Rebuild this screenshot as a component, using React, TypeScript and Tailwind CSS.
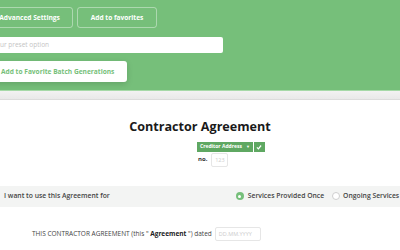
export default function App() {
  return (
    <div
      className="h-[250px] w-[400px] overflow-hidden bg-white"
      style={{ fontFamily: "'Open Sans', 'Noto Sans', sans-serif" }}
    >
      <div className="h-[90px] bg-[#76bf7a] pt-[7px]">
        <div className="-ml-[14px] flex gap-[4px]">
          <button className="flex h-[21px] w-[87px] items-center justify-center rounded-[3px] border border-white/40 text-[6.6px] font-bold text-white">
            Advanced Settings
          </button>
          <button className="flex h-[21px] w-[80px] items-center justify-center rounded-[3px] border border-white/40 text-[6.6px] font-bold text-white">
            Add to favorites
          </button>
        </div>
        <div className="-ml-[12px] mt-[9px] flex h-[16px] w-[235px] items-center rounded-[2px] bg-white px-[12px] text-[6.5px] text-[#c4c4c4]">
          ur preset option
        </div>
        <button className="-ml-[10px] mt-[8px] flex h-[21px] w-[137px] items-center rounded-[3px] bg-white pl-[11px] text-[6.6px] font-bold text-[#76bf7a] shadow-[0_2px_6px_rgba(0,0,0,0.15)]">
          Add to Favorite Batch Generations
        </button>
      </div>
      <div className="h-[10px] border-t border-[#a6d9a8] border-b border-b-[#dcdcdc] bg-gradient-to-b from-[#f2f2f2] to-[#e9e9e9]" />

      <div className="mt-[18px] text-center text-[12.6px] font-bold text-[#1a1a1a]">
        Contractor Agreement
      </div>
      <div className="ml-[197px] mt-[5px] flex h-[10px] gap-px">
        <div className="flex items-center gap-[4px] bg-[#5fa862] px-[3px] text-[5px] font-bold text-white">
          Creditor Address <span className="text-[4px]">▼</span>
        </div>
        <div className="flex w-[11px] items-center justify-center bg-[#5fa862]">
          <svg viewBox="0 0 10 10" className="h-[6px] w-[6px]" fill="none" stroke="white" strokeWidth="2">
            <path d="M1.5 5.5 L4 8 L8.5 2.5" />
          </svg>
        </div>
      </div>
      <div className="ml-[198px] mt-[1px] flex items-center gap-[4px]">
        <span className="text-[6px] font-bold text-[#333]">no.</span>
        <span className="flex h-[14px] w-[17px] items-center justify-center rounded-[2px] border border-[#e6e6e6] text-[5.5px] text-[#cccccc]">
          123
        </span>
      </div>

      <div className="mt-[19px] flex h-[21px] items-center bg-[#f3f4f3] pl-[4px] text-[6.8px] font-semibold text-[#444]">
        <span className="whitespace-nowrap">I want to use this Agreement for</span>
        <div className="ml-[126px] flex items-center gap-[4px]">
          <span className="flex h-[8px] w-[8px] shrink-0 items-center justify-center rounded-full bg-[#76bf7a]">
            <span className="h-[3px] w-[3px] rounded-full bg-white" />
          </span>
          <span className="whitespace-nowrap">Services Provided Once</span>
        </div>
        <div className="ml-[8px] flex items-center gap-[3px]">
          <span className="h-[8px] w-[8px] shrink-0 rounded-full border border-[#cfcfcf] bg-white" />
          <span className="whitespace-nowrap">Ongoing Services</span>
        </div>
      </div>

      <div className="ml-[32px] mt-[20px] flex items-center gap-[3px] whitespace-nowrap text-[6.5px] text-[#444]">
        <span>
          THIS CONTRACTOR AGREEMENT (this " <b className="font-bold text-[#222]">Agreement</b> ") dated
        </span>
        <span className="flex h-[14px] w-[46px] items-center rounded-[2px] border border-[#e6e6e6] pl-[3px] text-[5.5px] text-[#cccccc]">
          DD.MM.YYYY
        </span>
      </div>
    </div>
  );
}
